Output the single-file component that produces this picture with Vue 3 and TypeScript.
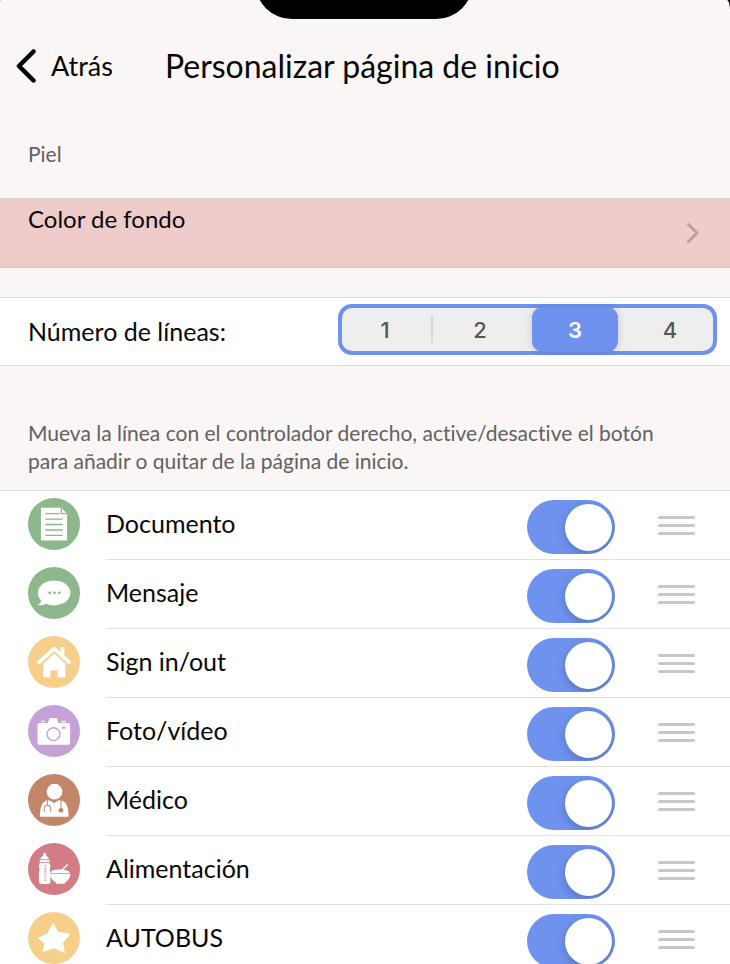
<script setup lang="ts">
import { ref } from 'vue'

type IconName = 'document' | 'message' | 'home' | 'camera' | 'doctor' | 'food' | 'star'

interface HomeItem {
  id: string
  label: string
  icon: IconName
  enabled: boolean
}

const lineOptions: number[] = [1, 2, 3, 4]
const lines = ref<number>(3)

const items = ref<HomeItem[]>([
  { id: 'documento', label: 'Documento', icon: 'document', enabled: true },
  { id: 'mensaje', label: 'Mensaje', icon: 'message', enabled: true },
  { id: 'sign', label: 'Sign in/out', icon: 'home', enabled: true },
  { id: 'foto', label: 'Foto/vídeo', icon: 'camera', enabled: true },
  { id: 'medico', label: 'Médico', icon: 'doctor', enabled: true },
  { id: 'alimentacion', label: 'Alimentación', icon: 'food', enabled: true },
  { id: 'autobus', label: 'AUTOBUS', icon: 'star', enabled: true },
])
</script>

<template>
  <div class="screen">
    <div class="notch"></div>

    <header class="top">
      <button class="back" type="button">
        <svg class="back-icon" viewBox="0 0 20 34" aria-hidden="true">
          <path d="M17.500 2.500L3 17l14.500 14.500" />
        </svg>
        <span>Atrás</span>
      </button>
      <h1 class="title">Personalizar página de inicio</h1>
    </header>

    <main>
      <h2 class="section">Piel</h2>
      <a class="color-row" href="#color">
        <span>Color de fondo</span>
        <svg class="chevron" viewBox="0 0 14 22" aria-hidden="true">
          <path d="M2.500 2.500L11 11l-8.500 8.500" />
        </svg>
      </a>

      <div class="lines-row">
        <span id="lines-label">Número de líneas:</span>
        <div class="segments" role="radiogroup" aria-labelledby="lines-label">
          <label v-for="n in lineOptions" :key="n" class="segment">
            <input v-model="lines" class="segment-input" type="radio" name="lines" :value="n" />
            <span class="segment-text">{{ n }}</span>
          </label>
        </div>
      </div>

      <p class="help">
        Mueva la línea con el controlador derecho, active/desactive el botón para añadir o quitar de
        la página de inicio.
      </p>

      <ul class="list">
        <li v-for="item in items" :key="item.id" class="item">
          <svg class="icon" :class="item.icon" viewBox="0 0 153 153" aria-hidden="true">
            <circle class="disc" cx="76.500" cy="76.500" r="76.500" />
            <g v-if="item.icon === 'document'">
              <path class="fill" d="M40 29H98L115 46V123Q115 125 113 125H40Q38 125 38 123V31Q38 29 40 29Z" />
              <path class="cut" d="M98 30V46H114M51 46H92M51 62H102M51 78H102M51 94H102M51 110H102" />
            </g>
            <g v-else-if="item.icon === 'message'">
              <path class="fill" d="M77 40C104 40 125 56 125 76C125 97 104 113 77 113C68 113 60 111 53 108C47 112 38 113 28 112C34 109 38 104 39 99C32 92 29 85 29 76C29 56 50 40 77 40Z" />
              <circle class="hole" cx="64" cy="76" r="4" />
              <circle class="hole" cx="78" cy="76" r="4" />
              <circle class="hole" cx="92" cy="76" r="4" />
            </g>
            <g v-else-if="item.icon === 'home'">
              <path class="fill" d="M96 32H107V62L96 52Z" />
              <path class="stroke wide" d="M33 77L77 37L121 77" />
              <path class="fill" d="M77 50L111 81V120Q111 123 108 123H86V102H67V123H47Q44 123 44 120V81Z" />
            </g>
            <g v-else-if="item.icon === 'camera'">
              <path class="fill" d="M59 53L62 41Q63 38 66 38H82Q85 38 86 41L89 53Z" />
              <rect class="fill" x="39" y="46" width="11" height="5" rx="1" />
              <rect class="fill" x="98" y="46" width="14" height="5" rx="1" />
              <rect class="fill" x="28" y="53" width="96" height="64" rx="5" />
              <circle class="cut" cx="75" cy="86" r="19" />
              <rect class="hole" x="100" y="64" width="10" height="6" rx="1" />
            </g>
            <g v-else-if="item.icon === 'doctor'">
              <circle class="fill" cx="78" cy="52" r="23" />
              <path class="fill" d="M55 78Q66 75 77 86Q88 75 99 78Q120 83 119 126H35Q35 83 55 78Z" />
              <path class="cut fine" d="M57 77V92M48 112V103Q48 92 57 92Q67 92 67 103V112M97 76V104" />
              <circle class="hole" cx="97" cy="107" r="7" />
            </g>
            <g v-else-if="item.icon === 'food'">
              <path class="fill" d="M44 38Q44 29 49 29Q54 29 54 38Q61 40 62 48H36Q37 40 44 38Z" />
              <rect class="fill" x="34" y="50" width="30" height="7" rx="2" />
              <path class="fill" d="M36 59H62Q66 63 66 70Q62 80 66 90V114Q66 121 58 121H40Q32 121 32 114V90Q36 80 32 70Q32 63 36 59Z" />
              <path class="cut ticks" d="M51 66V112" />
              <path class="fill" d="M66 89Q68 78 85 79Q100 75 112 80Q121 81 124 89Z" />
              <path class="fill" d="M64 91H125Q124 107 109 116V120H82V116Q67 108 64 91Z" />
              <path class="stroke thin" d="M98 82L116 64" />
            </g>
            <path
              v-else
              class="fill star-shape"
              d="M74 35L87 60L122 66L101 89L106 118L77 104L45 116L51 91L32 77L59 64Z"
            />
          </svg>

          <label class="item-label" :for="item.id">{{ item.label }}</label>
          <input :id="item.id" v-model="item.enabled" class="toggle" type="checkbox" role="switch" />
          <button class="handle" type="button" :aria-label="`Mover ${item.label}`">
            <span class="bar"></span>
            <span class="bar"></span>
            <span class="bar"></span>
          </button>
        </li>
      </ul>
    </main>
  </div>
</template>

<style>
body {
  background: #000;
}
</style>

<style scoped>
* {
  box-sizing: border-box;
}

.screen {
  position: relative;
  overflow: hidden;
  min-height: 100vh;
  border-radius: 1px 3px 0 0 / 1px 10px 0 0;
  background: #faf6f5;
  color: #080808;
  font-family: Lato, 'Noto Sans', sans-serif;
  font-size: 25px;
  font-variant-ligatures: none;
  line-height: 32px;
}

button {
  padding: 0;
  border: 0;
  background: none;
  color: inherit;
  font: inherit;
}

.notch {
  position: absolute;
  top: -56px;
  left: 50%;
  width: 218px;
  height: 75px;
  margin-left: -110px;
  border-radius: 37px;
  background: #000;
}

.top {
  display: flex;
  align-items: center;
  gap: 52px;
  padding: 46px 16px 0;
}

.back {
  display: flex;
  align-items: center;
  gap: 15px;
  font-size: 27px;
}

.back-icon {
  width: 20px;
  height: 34px;
  fill: none;
  stroke: #000;
  stroke-width: 4.500;
  stroke-linecap: round;
  stroke-linejoin: round;
}

.title {
  margin: 0;
  font-size: 32px;
  font-weight: 400;
  line-height: 40px;
}

.section {
  margin: 0;
  padding: 54px 28px 30px;
  color: #636161;
  font-size: 21px;
  font-weight: 400;
  line-height: 28px;
}

.color-row {
  display: flex;
  justify-content: space-between;
  height: 70px;
  padding: 4px 30px 0 28px;
  border-top: 1px solid #d9cccb;
  border-bottom: 1px solid #d9c3c1;
  background: #efccc9;
  color: inherit;
  font-size: 24px;
  text-decoration: none;
}

.chevron {
  width: 14px;
  height: 22px;
  margin-top: 19px;
  fill: none;
  stroke: #b9a09f;
  stroke-width: 3;
  stroke-linecap: round;
  stroke-linejoin: round;
}

.lines-row {
  display: flex;
  align-items: center;
  justify-content: space-between;
  height: 69px;
  margin-top: 29px;
  padding: 0 13px 2px 28px;
  border-top: 1px solid #dedcdc;
  border-bottom: 1px solid #dedcdc;
  background: #fff;
}

.segments {
  display: grid;
  grid-template-columns: repeat(4, 1fr);
  column-gap: 9px;
  width: 379px;
  height: 51px;
  margin-bottom: 2px;
  border: 4px solid #6e92ee;
  border-radius: 14px;
  background: #eee;
}

.segment {
  position: relative;
  display: flex;
  align-items: center;
  justify-content: center;
  color: #555;
  font-family: Inter, sans-serif;
  font-size: 22px;
  font-weight: 500;
}

.segment:first-child::after {
  content: '';
  position: absolute;
  top: 8px;
  right: -5px;
  bottom: 8px;
  width: 2px;
  background: #d8d8d8;
}

.segment-input {
  position: absolute;
  inset: 0;
  margin: 0;
  opacity: 0;
}

.segment-text {
  display: flex;
  align-items: center;
  justify-content: center;
  width: 86px;
  height: 45px;
  margin: -1px 0;
  border-radius: 11px;
}

.segment-input:checked + .segment-text {
  background: #6e92ee;
  box-shadow: 0 0 8px rgb(0 0 0 / 16%);
  color: #fff;
  font-weight: 600;
}

.help {
  margin: 0;
  padding: 53px 40px 15px 28px;
  color: #636161;
  font-size: 21px;
  line-height: 28px;
}

.list {
  margin: 0;
  padding: 0;
  border-top: 1px solid #dedcdc;
  background: #fff;
  list-style: none;
}

.item {
  display: flex;
  align-items: center;
  height: 69px;
  padding: 0 0 3px 28px;
  background: linear-gradient(#e0e0e0, #e0e0e0) 106px 100% / 100% 1px no-repeat;
}

.icon {
  flex: none;
  width: 52px;
  height: 52px;
  margin-right: 26px;
}

.item-label {
  flex: 1;
  margin-bottom: 2px;
}

.document,
.message {
  color: #8cb88c;
}

.home,
.star {
  color: #f6cf8b;
}

.camera {
  color: #c5a1d7;
}

.doctor {
  color: #c48669;
}

.food {
  color: #d27c85;
}

.disc,
.hole {
  fill: currentColor;
}

.fill {
  fill: #fff;
}

.cut {
  fill: none;
  stroke: currentColor;
  stroke-width: 4;
}

.fine {
  stroke-width: 3;
}

.ticks {
  stroke-width: 8;
  stroke-dasharray: 2 4;
}

.stroke {
  fill: none;
  stroke: #fff;
  stroke-linecap: round;
  stroke-linejoin: round;
}

.wide {
  stroke-width: 11;
}

.home .fill:last-child {
  stroke: currentColor;
  stroke-width: 2;
}

.thin {
  stroke-width: 4;
}

.star-shape {
  stroke: #fff;
  stroke-width: 4;
  stroke-linejoin: round;
}

.toggle {
  display: flex;
  align-items: center;
  width: 88px;
  height: 54px;
  margin: 6px 43px 0 0;
  padding: 0 3px;
  overflow: hidden;
  border-radius: 27px;
  background: #ddd;
  appearance: none;
}

.toggle::before {
  content: '';
  width: 47px;
  height: 47px;
  border-radius: 50%;
  background: #fff;
  box-shadow: 0 3px 9px rgb(0 0 0 / 22%);
}

.toggle:checked {
  justify-content: flex-end;
  background: #6e92ee;
}

.handle {
  display: flex;
  flex-direction: column;
  gap: 5px;
  width: 37px;
  margin: 3px 35px 0 0;
}

.bar {
  width: 100%;
  height: 3px;
  border-radius: 2px;
  background: #c8c8c8;
}
</style>
